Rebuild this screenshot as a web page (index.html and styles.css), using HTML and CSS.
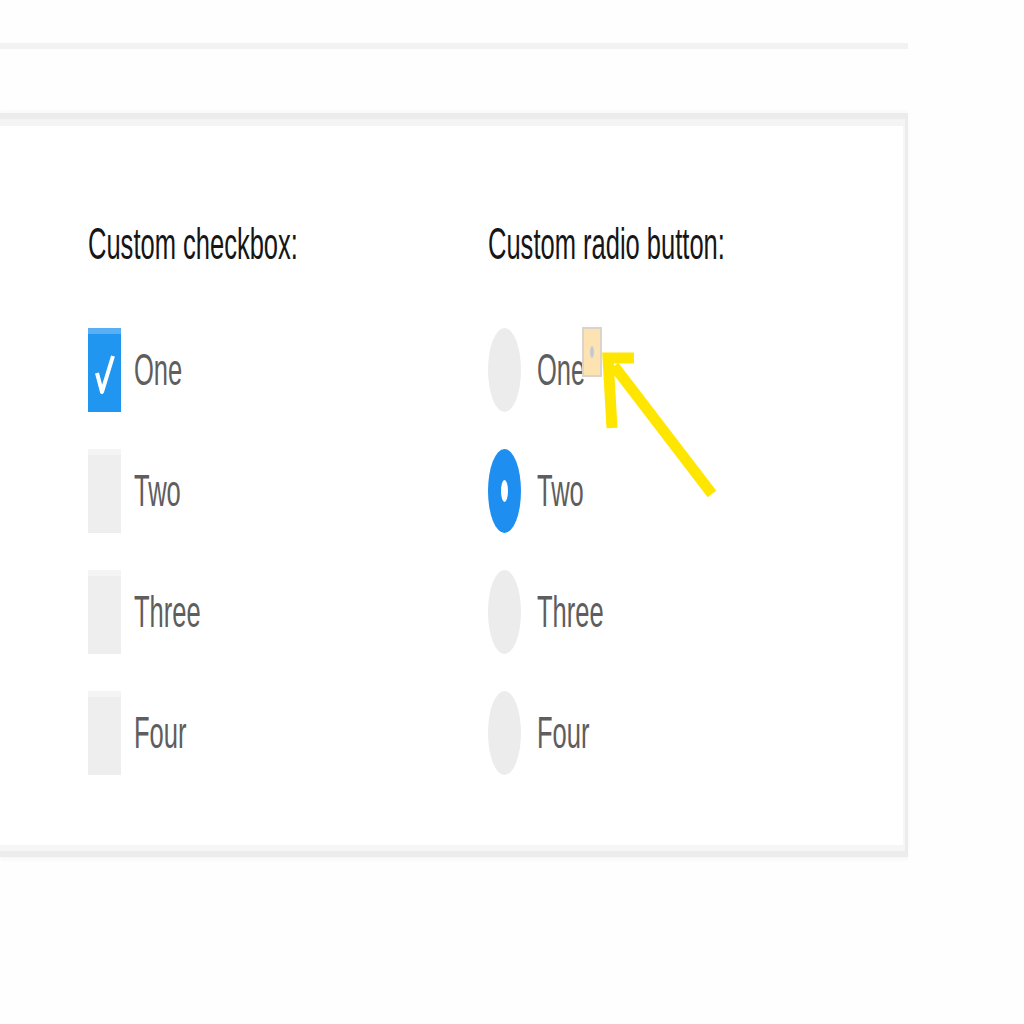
FILE: index.html
```html
<!DOCTYPE html>
<html lang="en">
<head>
<meta charset="utf-8">
<title>Custom checkbox and radio</title>
<link rel="stylesheet" href="styles.css">
</head>
<body>
<div class="topline"></div>
<section class="panel">
  <div class="col">
    <h2 class="heading"><span class="txt">Custom checkbox:</span></h2>
    <ul class="list">
      <li class="row">
        <span class="box checked"><svg class="check" width="33" height="84" viewBox="0 0 33 84"><polyline points="9,45 14,64 25,28" /></svg></span>
        <span class="txt label">One</span>
      </li>
      <li class="row"><span class="box"></span><span class="txt label">Two</span></li>
      <li class="row"><span class="box"></span><span class="txt label">Three</span></li>
      <li class="row"><span class="box"></span><span class="txt label">Four</span></li>
    </ul>
  </div>
  <div class="col">
    <h2 class="heading"><span class="txt">Custom radio button:</span></h2>
    <ul class="list">
      <li class="row radio-row">
        <span class="radio"></span>
        <span class="txt label">One</span>
        <span class="focus"><span class="focus-dot"></span></span>
      </li>
      <li class="row radio-row"><span class="radio selected"><span class="radio-dot"></span></span><span class="txt label">Two</span></li>
      <li class="row radio-row"><span class="radio"></span><span class="txt label">Three</span></li>
      <li class="row radio-row"><span class="radio"></span><span class="txt label">Four</span></li>
    </ul>
  </div>
</section>
<svg class="arrow" width="1024" height="1024" viewBox="0 0 1024 1024">
  <line x1="712" y1="494" x2="614" y2="366" />
  <polyline points="612,428 608,358 634,358" />
</svg>
</body>
</html>
```

FILE: styles.css
```css
html, body {
  margin: 0;
  padding: 0;
}
body {
  background: #fefefe;
  font-family: "Liberation Sans", Arial, sans-serif;
  width: 1024px;
  height: 1024px;
  position: relative;
  overflow: hidden;
}
.topline {
  margin-top: 43px;
  width: 908px;
  height: 6px;
  background: #f2f2f2;
}
.panel {
  margin-top: 64px;
  width: 908px;
  height: 744px;
  box-sizing: border-box;
  background: #ffffff;
  border-top: 6px solid #ececec;
  border-right: 3px solid #ececec;
  border-bottom: 6px solid #ececec;
  box-shadow: inset 0 7px 0 #f4f4f4, inset 0 -6px 0 #f6f6f6, inset -2px 0 0 #f6f6f6, 0 -3px 2px #fafafa, 0 3px 3px #f8f8f8;
  display: flex;
  padding: 100px 0 0 88px;
}
.col {
  width: 400px;
  display: flex;
  flex-direction: column;
}
.heading {
  margin: 0;
  font-size: 44px;
  line-height: 50px;
  font-weight: 400;
  color: #161616;
  height: 50px;
}
.txt {
  display: inline-block;
  white-space: nowrap;
  transform: scaleX(0.58);
  transform-origin: 0 50%;
}
.list {
  list-style: none;
  margin: 59px 0 0 0;
  padding: 0;
  display: flex;
  flex-direction: column;
  gap: 37px;
}
.row {
  position: relative;
  height: 84px;
  display: flex;
  align-items: center;
  gap: 13px;
}
.radio-row {
  gap: 16px;
}
.label {
  font-size: 44px;
  line-height: 50px;
  color: #5e5e5e;
}
.box {
  width: 33px;
  height: 84px;
  flex: none;
  box-sizing: border-box;
  background: #eeeeee;
  border-top: 6px solid #f4f4f4;
  position: relative;
}
.box.checked {
  background: #2196f0;
  border-top-color: #5aaef2;
}
.check {
  position: absolute;
  left: 0;
  top: -6px;
}
.check polyline {
  fill: none;
  stroke: #ffffff;
  stroke-width: 4;
  stroke-linejoin: round;
}
.radio {
  width: 33px;
  height: 84px;
  flex: none;
  border-radius: 50%;
  background: #ececec;
  display: flex;
  align-items: center;
  justify-content: center;
}
.radio.selected {
  background: #1e8ff0;
}
.radio-dot {
  width: 7px;
  height: 22px;
  border-radius: 50%;
  background: #ffffff;
}
.focus {
  position: absolute;
  left: 94px;
  top: -1px;
  width: 20px;
  height: 50px;
  box-sizing: border-box;
  border: 2px solid #dcd4cb;
  background: #fde3b2;
  display: flex;
  align-items: center;
  justify-content: center;
}
.focus-dot {
  width: 4px;
  height: 12px;
  border-radius: 50%;
  background: #c3cad6;
}
.arrow {
  position: absolute;
  left: 0;
  top: 0;
  pointer-events: none;
}
.arrow line,
.arrow polyline {
  fill: none;
  stroke: #ffe600;
  stroke-width: 11;
  stroke-linecap: butt;
  stroke-linejoin: miter;
}
```
